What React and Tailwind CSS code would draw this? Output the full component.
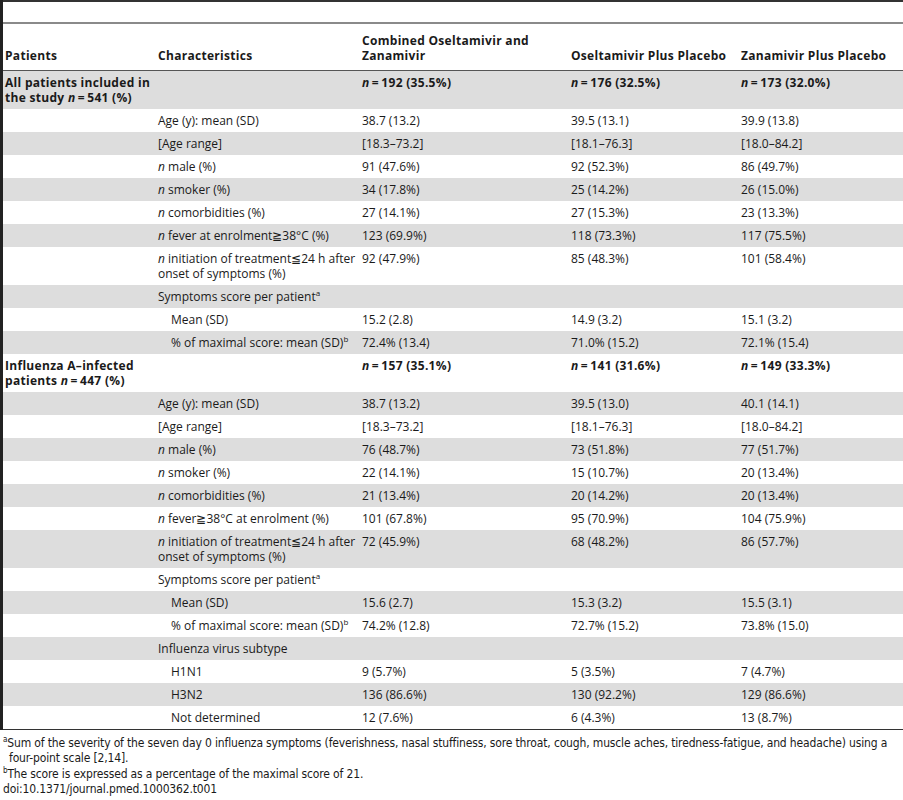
import React from "react";

const Sup = ({ children }) => (
  <span className="relative -top-[5px] text-[8px] leading-none">{children}</span>
);

const sections = [
  {
    title: (
      <>
        All patients included in
        <br />
        the study <i>n</i>{"\u2009=\u2009"}541 (%)
      </>
    ),
    totals: ["192 (35.5%)", "176 (32.5%)", "173 (32.0%)"],
    rows: [
      ["Age (y): mean (SD)", "38.7 (13.2)", "39.5 (13.1)", "39.9 (13.8)"],
      ["[Age range]", "[18.3–73.2]", "[18.1–76.3]", "[18.0–84.2]"],
      [<><i>n</i> male (%)</>, "91 (47.6%)", "92 (52.3%)", "86 (49.7%)"],
      [<><i>n</i> smoker (%)</>, "34 (17.8%)", "25 (14.2%)", "26 (15.0%)"],
      [<><i>n</i> comorbidities (%)</>, "27 (14.1%)", "27 (15.3%)", "23 (13.3%)"],
      [<><i>n</i> fever at enrolment≧38°C (%)</>, "123 (69.9%)", "118 (73.3%)", "117 (75.5%)"],
      [
        <><i>n</i> initiation of treatment≦24 h after<br />onset of symptoms (%)</>,
        "92 (47.9%)",
        "85 (48.3%)",
        "101 (58.4%)",
      ],
      [<>Symptoms score per patient<Sup>a</Sup></>, "", "", ""],
      ["Mean (SD)", "15.2 (2.8)", "14.9 (3.2)", "15.1 (3.2)", true],
      [<>% of maximal score: mean (SD)<Sup>b</Sup></>, "72.4% (13.4)", "71.0% (15.2)", "72.1% (15.4)", true],
    ],
  },
  {
    title: (
      <>
        Influenza A–infected
        <br />
        patients <i>n</i>{"\u2009=\u2009"}447 (%)
      </>
    ),
    totals: ["157 (35.1%)", "141 (31.6%)", "149 (33.3%)"],
    rows: [
      ["Age (y): mean (SD)", "38.7 (13.2)", "39.5 (13.0)", "40.1 (14.1)"],
      ["[Age range]", "[18.3–73.2]", "[18.1–76.3]", "[18.0–84.2]"],
      [<><i>n</i> male (%)</>, "76 (48.7%)", "73 (51.8%)", "77 (51.7%)"],
      [<><i>n</i> smoker (%)</>, "22 (14.1%)", "15 (10.7%)", "20 (13.4%)"],
      [<><i>n</i> comorbidities (%)</>, "21 (13.4%)", "20 (14.2%)", "20 (13.4%)"],
      [<><i>n</i> fever≧38°C at enrolment (%)</>, "101 (67.8%)", "95 (70.9%)", "104 (75.9%)"],
      [
        <><i>n</i> initiation of treatment≦24 h after<br />onset of symptoms (%)</>,
        "72 (45.9%)",
        "68 (48.2%)",
        "86 (57.7%)",
      ],
      [<>Symptoms score per patient<Sup>a</Sup></>, "", "", ""],
      ["Mean (SD)", "15.6 (2.7)", "15.3 (3.2)", "15.5 (3.1)", true],
      [<>% of maximal score: mean (SD)<Sup>b</Sup></>, "74.2% (12.8)", "72.7% (15.2)", "73.8% (15.0)", true],
      ["Influenza virus subtype", "", "", ""],
      ["H1N1", "9 (5.7%)", "5 (3.5%)", "7 (4.7%)", true],
      ["H3N2", "136 (86.6%)", "130 (92.2%)", "129 (86.6%)", true],
      ["Not determined", "12 (7.6%)", "6 (4.3%)", "13 (8.7%)", true],
    ],
  },
];

export default function App() {
  let stripe = 0;
  const bg = () => (stripe++ % 2 === 0 ? "bg-[#dddddd]" : "bg-white");

  return (
    <div
      className="w-[903px] bg-white text-[#1a1a1a]"
      style={{ fontFamily: '"Open Sans", "Liberation Sans", sans-serif' }}
    >
      <div className="border-l-[3px] border-[#222]">
        {/* top rules */}
        <div className="h-[2px] bg-[#333]" />
        <div className="h-[20px]" />
        <div className="h-[2px] bg-[#8a8a8a]" />

        <table className="w-[900px] table-fixed border-collapse text-[12px] leading-[15px]">
          <colgroup>
            <col className="w-[152px]" />
            <col className="w-[204px]" />
            <col className="w-[209px]" />
            <col className="w-[170px]" />
            <col className="w-[165px]" />
          </colgroup>
          <thead>
            <tr className="h-[46px] border-b border-[#555] font-bold text-left align-bottom tracking-[0.3px]">
              <th className="pl-[2px] pb-[7px]">Patients</th>
              <th className="pl-[3px] pb-[7px]">Characteristics</th>
              <th className="pl-[3px] pb-[7px]">
                Combined Oseltamivir and
                <br />
                Zanamivir
              </th>
              <th className="pl-[3px] pb-[7px]">Oseltamivir Plus Placebo</th>
              <th className="pl-[3px] pb-[7px]">Zanamivir Plus Placebo</th>
            </tr>
          </thead>
          <tbody>
            {sections.map((s, si) => (
              <React.Fragment key={si}>
                <tr className={`${bg()} align-top font-bold tracking-[0.3px]`}>
                  <td className="pl-[2px] py-[4px]">{s.title}</td>
                  <td />
                  {s.totals.map((t, i) => (
                    <td key={i} className="pl-[3px] py-[4px]">
                      <i>n</i>
                      {"\u2009=\u2009"}
                      {t}
                    </td>
                  ))}
                </tr>
                {s.rows.map((r, ri) => (
                  <tr key={ri} className={`${bg()} align-top`}>
                    <td className="py-[4px]" />
                    <td className={`py-[4px] ${r[4] ? "pl-[16px]" : "pl-[3px]"}`}>{r[0]}</td>
                    <td className="pl-[3px] py-[4px]">{r[1]}</td>
                    <td className="pl-[3px] py-[4px]">{r[2]}</td>
                    <td className="pl-[3px] py-[4px]">{r[3]}</td>
                  </tr>
                ))}
              </React.Fragment>
            ))}
          </tbody>
        </table>
        <div className="h-px bg-[#333]" />
      </div>

      {/* footnotes */}
      <div
        className="pt-[6px] pl-[3px] pr-[2px] text-[12px] leading-[15.5px] tracking-[-0.15px] text-[#1a1a1a]"
        style={{ fontFamily: '"Liberation Sans Narrow", "DejaVu Sans Condensed", sans-serif' }}
      >
        <p className="pl-[6px] -indent-[6px]">
          <Sup>a</Sup>Sum of the severity of the seven day 0 influenza symptoms (feverishness, nasal
          stuffiness, sore throat, cough, muscle aches, tiredness-fatigue, and headache) using a
          four-point scale [2,14].
        </p>
        <p>
          <Sup>b</Sup>The score is expressed as a percentage of the maximal score of 21.
        </p>
        <p>doi:10.1371/journal.pmed.1000362.t001</p>
      </div>
    </div>
  );
}
